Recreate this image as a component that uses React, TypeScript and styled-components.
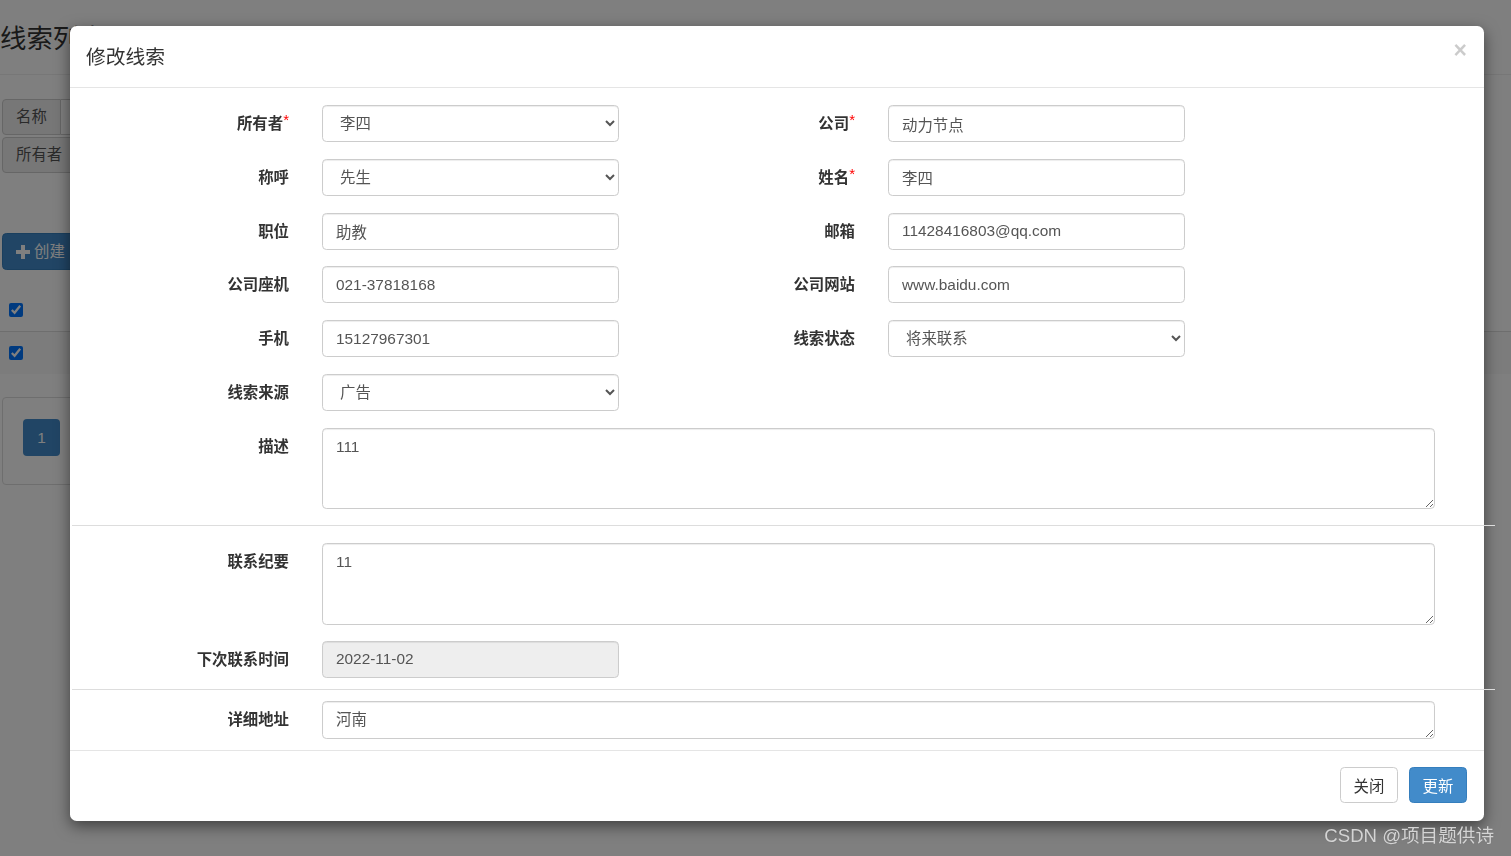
import React from "react";
import styled, { createGlobalStyle } from "styled-components";

const Global = createGlobalStyle`
  html, body { margin: 0; padding: 0; }
  body {
    font-family: "Liberation Sans", "Noto Sans CJK SC", sans-serif;
    font-size: 15.4px;
    line-height: 1.42857;
    color: #333;
    background: #fff;
    overflow: hidden;
  }
  * { box-sizing: border-box; }
`;

/* ---------- background page ---------- */
const Page = styled.div`
  width: 1511px;
  height: 856px;
  padding: 0 0 0 2px;
`;

const PageTitle = styled.h3`
  margin: 25px 0 0 -2px;
  font-size: 26.4px;
  font-weight: 400;
  line-height: 1.1;
  color: #333;
`;

const PageRule = styled.hr`
  margin: 20px 0 24px -2px;
  border: 0;
  border-top: 1px solid #eee;
`;

const FilterGroup = styled.div`
  display: flex;
  height: 36px;
  margin-bottom: 2px;
`;

const Addon = styled.span`
  display: flex;
  align-items: center;
  padding: 0 13px;
  background: #eee;
  border: 1px solid #ccc;
  border-radius: 4px 0 0 4px;
  color: #555;
  font-size: 15.4px;
`;

const FilterInput = styled.div`
  width: 300px;
  border: 1px solid #ccc;
  border-left: 0;
  border-radius: 0 4px 4px 0;
`;

const CreateButton = styled.button`
  margin-top: 60px;
  height: 37px;
  padding: 0 13px;
  display: flex;
  align-items: center;
  gap: 4px;
  background: #428bca;
  border: 1px solid #357ebd;
  border-radius: 4.4px;
  color: #fff;
  font: inherit;
`;

const Table = styled.div`
  margin-top: 18px;
  margin-left: -2px;
`;

const TableRow = styled.div<{ $striped?: boolean }>`
  height: 43px;
  display: flex;
  align-items: center;
  padding-left: 9px;
  border-top: ${(p) => (p.$striped ? "1px solid #ddd" : "0")};
  background: ${(p) => (p.$striped ? "#f9f9f9" : "transparent")};
  input { margin: 0; width: 14px; height: 14px; }
`;

const PagerPanel = styled.div`
  margin-top: 23px;
  width: 700px;
  height: 88px;
  border: 1px solid #ddd;
  border-radius: 4px;
  padding: 21px 20px;
`;

const PageButton = styled.span`
  display: inline-flex;
  align-items: center;
  justify-content: center;
  width: 37px;
  height: 37px;
  background: #428bca;
  border-radius: 4px;
  color: #fff;
  font-size: 15.4px;
`;

const Backdrop = styled.div`
  position: fixed;
  inset: 0;
  background: rgba(0, 0, 0, 0.5);
`;

/* ---------- modal ---------- */
const Modal = styled.div`
  position: fixed;
  top: 26px;
  left: 70px;
  width: 1414px;
  background: #fff;
  border-radius: 6.6px;
  box-shadow: 0 5px 15px rgba(0, 0, 0, 0.5);
`;

const Header = styled.div`
  display: flex;
  justify-content: space-between;
  align-items: flex-start;
  padding: 16.5px 17px 16.5px 16px;
  border-bottom: 1px solid #e5e5e5;
`;

const Title = styled.h4`
  margin: 0;
  font-size: 19.8px;
  font-weight: 400;
  line-height: 28px;
  color: #333;
`;

const Close = styled.button`
  margin-top: -4px;
  padding: 0;
  border: 0;
  background: transparent;
  font-family: "Liberation Sans", sans-serif;
  font-size: 23px;
  font-weight: 700;
  line-height: 1;
  color: #000;
  opacity: 0.2;
`;

const Body = styled.div`
  padding: 17px 49px 11px 16px;
`;

const FormRow = styled.div<{ $mb?: number }>`
  display: flex;
  gap: 33px;
  margin-bottom: ${(p) => (p.$mb ?? 16.8)}px;
`;

const Field = styled.div`
  display: flex;
  gap: 33px;
  align-items: flex-start;
`;

const Label = styled.label`
  width: 203px;
  text-align: right;
  padding-top: 8px;
  font-weight: 700;
  line-height: 21px;
  font-size: 15.4px;
  color: #333;
`;

const Req = styled.span`
  color: #f00;
  font-family: "Liberation Sans", sans-serif;
  font-size: 15px;
  font-weight: 400;
  position: relative;
  top: -4px;
`;

const controlBase = `
  height: 37px;
  padding: 0 13px;
  border: 1px solid #ccc;
  border-radius: 4.4px;
  box-shadow: inset 0 1px 1px rgba(0, 0, 0, 0.075);
  font-family: "Liberation Sans", "Noto Sans CJK SC", sans-serif;
  font-size: 15.4px;
  color: #555;
  background-color: #fff;
  outline: none;
`;

const Input = styled.input<{ $wide?: boolean }>`
  ${controlBase}
  width: ${(p) => (p.$wide ? "1113px" : "297px")};
  &:disabled { background-color: #eee; color: #555; opacity: 1; }
`;

const Select = styled.select`
  ${controlBase}
  width: 297px;
  padding: 0 9px 0 13px;
`;

const TextArea = styled.textarea<{ $h: number }>`
  ${controlBase}
  width: 1113px;
  height: ${(p) => p.$h}px;
  padding: 7px 13px;
  line-height: 22px;
  resize: vertical;
  display: block;
`;

const Divider = styled.hr<{ $space: number }>`
  border: 0;
  border-top: 1px solid #ddd;
  margin: 0 -60px ${(p) => p.$space}px -14px;
`;

const Footer = styled.div`
  display: flex;
  justify-content: flex-end;
  gap: 11px;
  padding: 16px 17px 18px;
  border-top: 1px solid #e5e5e5;
`;

const Button = styled.button<{ $primary?: boolean }>`
  height: 36px;
  width: 58px;
  padding: 0;
  border-radius: 4.4px;
  font-family: "Liberation Sans", "Noto Sans CJK SC", sans-serif;
  font-size: 15.4px;
  border: 1px solid ${(p) => (p.$primary ? "#357ebd" : "#ccc")};
  background: ${(p) => (p.$primary ? "#428bca" : "#fff")};
  color: ${(p) => (p.$primary ? "#fff" : "#333")};
`;

const Watermark = styled.div`
  position: fixed;
  right: 17px;
  bottom: 6px;
  font-family: "Liberation Sans", "Noto Sans CJK SC", sans-serif;
  font-size: 18.6px;
  color: #d4d4d4;
  text-shadow: 0 0 1px rgba(0, 0, 0, 0.2);
`;

const Plus = () => (
  <svg width="14" height="14" viewBox="0 0 14 14">
    <path d="M5 0h4v5h5v4H9v5H5V9H0V5h5z" fill="#fff" />
  </svg>
);

export default function App() {
  return (
    <>
      <Global />
      <Page>
        <PageTitle>线索列表</PageTitle>
        <PageRule />
        <FilterGroup>
          <Addon>名称</Addon>
          <FilterInput />
        </FilterGroup>
        <FilterGroup>
          <Addon>所有者</Addon>
          <FilterInput />
        </FilterGroup>
        <CreateButton>
          <Plus />
          创建
        </CreateButton>
        <Table>
          <TableRow>
            <input type="checkbox" checked readOnly />
          </TableRow>
          <TableRow $striped>
            <input type="checkbox" checked readOnly />
          </TableRow>
        </Table>
        <PagerPanel>
          <PageButton>1</PageButton>
        </PagerPanel>
      </Page>
      <Backdrop />
      <Modal>
        <Header>
          <Title>修改线索</Title>
          <Close>×</Close>
        </Header>
        <Body>
          <FormRow>
            <Field>
              <Label>所有者<Req>*</Req></Label>
              <Select defaultValue="李四">
                <option>李四</option>
              </Select>
            </Field>
            <Field>
              <Label>公司<Req>*</Req></Label>
              <Input defaultValue="动力节点" />
            </Field>
          </FormRow>
          <FormRow>
            <Field>
              <Label>称呼</Label>
              <Select defaultValue="先生">
                <option>先生</option>
              </Select>
            </Field>
            <Field>
              <Label>姓名<Req>*</Req></Label>
              <Input defaultValue="李四" />
            </Field>
          </FormRow>
          <FormRow>
            <Field>
              <Label>职位</Label>
              <Input defaultValue="助教" />
            </Field>
            <Field>
              <Label>邮箱</Label>
              <Input defaultValue="11428416803@qq.com" />
            </Field>
          </FormRow>
          <FormRow>
            <Field>
              <Label>公司座机</Label>
              <Input defaultValue="021-37818168" />
            </Field>
            <Field>
              <Label>公司网站</Label>
              <Input defaultValue="www.baidu.com" />
            </Field>
          </FormRow>
          <FormRow>
            <Field>
              <Label>手机</Label>
              <Input defaultValue="15127967301" />
            </Field>
            <Field>
              <Label>线索状态</Label>
              <Select defaultValue="将来联系">
                <option>将来联系</option>
              </Select>
            </Field>
          </FormRow>
          <FormRow>
            <Field>
              <Label>线索来源</Label>
              <Select defaultValue="广告">
                <option>广告</option>
              </Select>
            </Field>
          </FormRow>
          <FormRow $mb={16.5}>
            <Field>
              <Label>描述</Label>
              <TextArea $h={81} defaultValue="111" />
            </Field>
          </FormRow>
          <Divider $space={16.5} />
          <FormRow $mb={16}>
            <Field>
              <Label>联系纪要</Label>
              <TextArea $h={82} defaultValue="11" />
            </Field>
          </FormRow>
          <FormRow $mb={11}>
            <Field>
              <Label>下次联系时间</Label>
              <Input disabled defaultValue="2022-11-02" />
            </Field>
          </FormRow>
          <Divider $space={11} />
          <FormRow $mb={0}>
            <Field>
              <Label>详细地址</Label>
              <TextArea $h={38} defaultValue="河南" />
            </Field>
          </FormRow>
        </Body>
        <Footer>
          <Button>关闭</Button>
          <Button $primary>更新</Button>
        </Footer>
      </Modal>
      <Watermark>CSDN @项目题供诗</Watermark>
    </>
  );
}
